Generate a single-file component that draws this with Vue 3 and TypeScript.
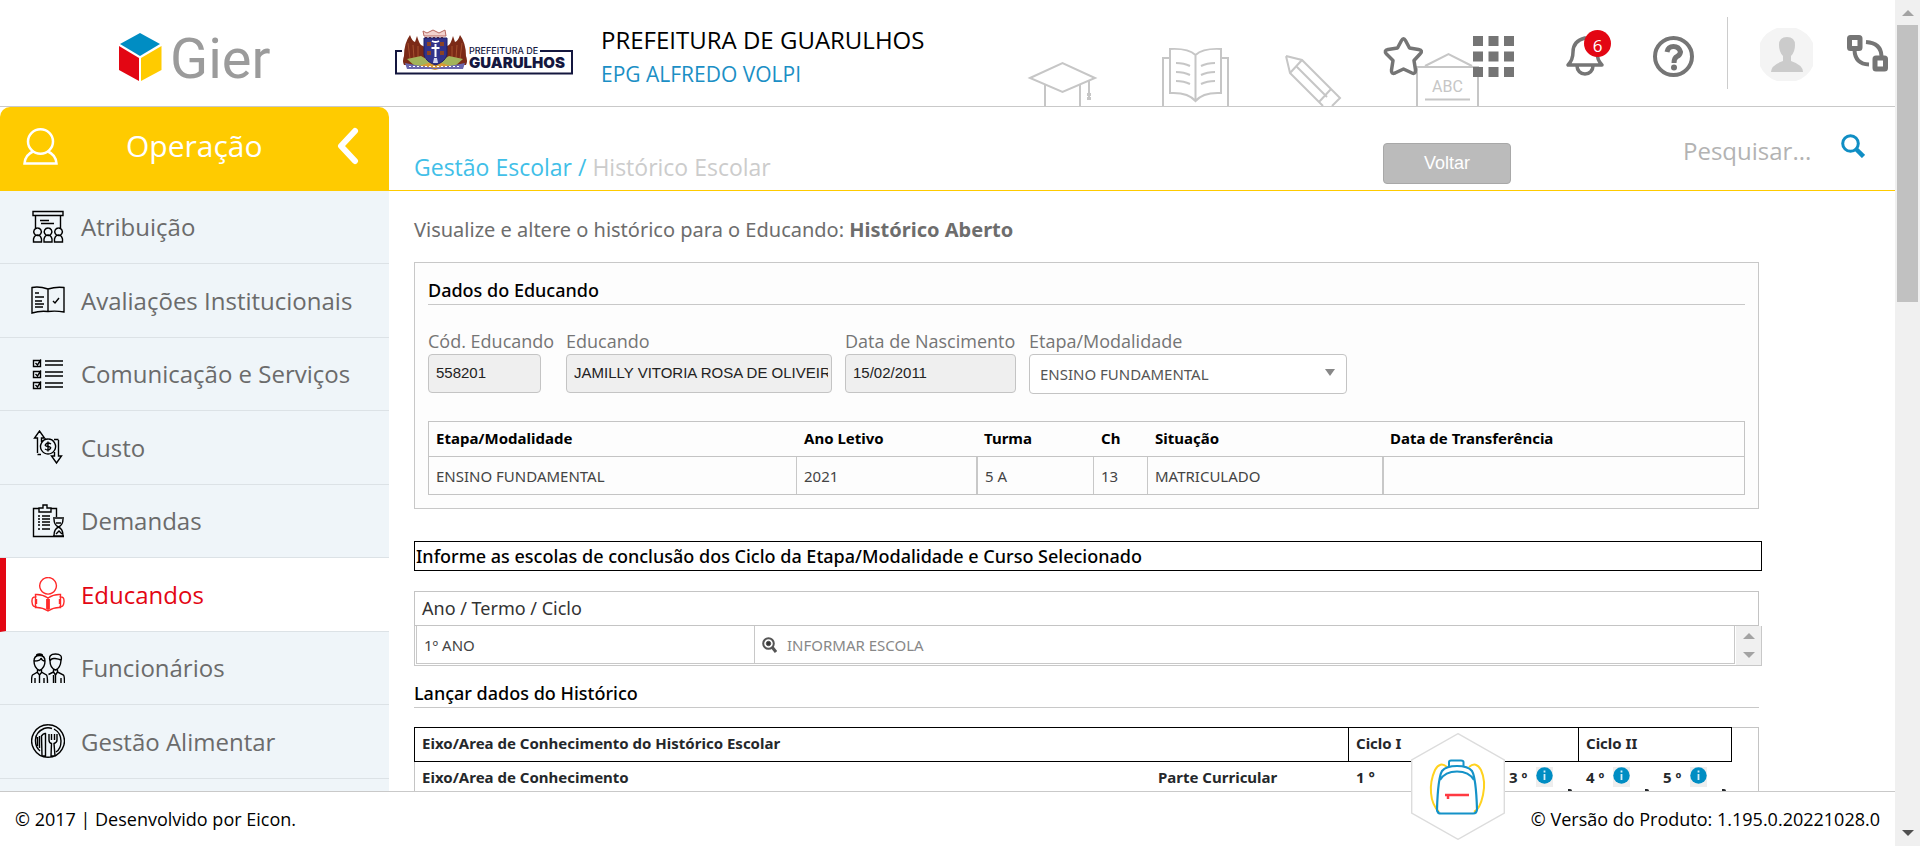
<script setup lang="ts">
import { ref } from 'vue'

interface MenuItem {
  label: string
  icon: string
  active?: boolean
}

const menu: MenuItem[] = [
  {
    label: 'Atribuição',
    icon: 'M2 1.5h30v4H2zM4.5 5.5V18M29.500 5.500V18M9 10.500h9M10 13.500h13M6.500 18a3.800 3.800 0 1 0 .1 0M17 18a3.800 3.800 0 1 0 .1 0M27.500 18a3.800 3.800 0 1 0 .1 0M2.500 32v-3q1-4 4-4t4 4v3zM13 32v-3q1-4 4-4t4 4v3zM23.500 32v-3q1-4 4-4t4 4v3z',
  },
  {
    label: 'Avaliações Institucionais',
    icon: 'M17 6Q8 3 1 4.500V30Q9 27.500 17 28.500Q25 27.500 33 29V4.500Q25 3.500 17 6V28.500M4 10h4M4 14h9M4 18h7M4 21h9M4 24h8M22 18l2 2 4-5',
  },
  {
    label: 'Comunicação e Serviços',
    icon: 'M2.500 3.500h7v6h-7zM4.500 6l2 2L10 2.500M2.500 14.500h7v6h-7zM4.500 17l2 2 3.500-5.500M2.500 25.500h7v6h-7zM4.500 28l2 2 3.500-5.500M14 4h18M14 8h18M14 15h18M14 19h18M14 26h18M14 30h18',
  },
  {
    label: 'Custo',
    icon: 'M6.500 23V8H3.500L8.500 1l5 7H10.500V12M6.500 24.500H10M27.500 10V26h3l-5 7-5-7h3V22M23 9.500h4.500M17 9a7.500 7.500 0 1 0 .1 0M20 14q-3-2-5 0t2 2.500 2 2.500-5 0M17 11.500v10',
  },
  {
    label: 'Demandas',
    icon: 'M8 4.500H2.500v28H33M8 8V4h4V1h4v3h4v4zM20 4.500h5.500V13M7 12h2M7 15h2M7 18h2M7 21h2M7 25h2M11 12h8M11 15h8M11 18h8M11 21h8M11 25h8M22 14h11M22 32h11M23 15q0 6 4.500 8-4.500 2-4.500 8.500M32 15q0 6-4.500 8 4.500 2 4.500 8.500M25 19h5M25 30l3-3 3 3',
  },
  {
    label: 'Educandos',
    icon: 'M17 .5a8.300 8.300 0 1 0 .1 0M17 21Q11 17 4.500 17.500V30.500Q11 30 17 34Q23 30 29.500 30.500V17.500Q23 17 17 21V34M15.800 22v10M18.200 22v10M5.500 20Q.5 19 1 25t4.500 4M5.500 22v5M28.500 20Q33.500 19 33 25t-4.500 4M28.500 22v5',
    active: true,
  },
  {
    label: 'Funcionários',
    icon: 'M5.500 5.500Q5 3 8.500 3t3 2.500M3 10q0-5.500 5.500-5.500T14 10q0 7-5.500 9.500Q3 17 3 10q7 0 7-3 1 3 4 3M6.500 18.500v2.500l-5 3Q.5 25 .5 32M10.500 18.500v2.500l5 3q1 1 1 8M6 21l2.500 3 2.500-3M8.500 24v8M4 27v5M13 27v5M19 10q-2-7 5.500-7T30 9.500Q29.500 17 24.500 19 19 17 19 10q1-3 5-2.500t6 1.500M22.500 18.500V21l-5 2.500M26.500 18.500V21l6 3q1 1 1 8M22.500 21l2 3 2-3M24.500 24v8M22.500 24v8M30 27v5',
  },
  {
    label: 'Gestão Alimentar',
    icon: 'M17 .7a16.300 16.300 0 1 0 .1 0M9 27Q4 23 4.500 15.500T13 4.500Q17 3 21 4.500M23 5q7 4 7 12t-5 11M10.500 12q2-3 4-2.500V32H11zM8.500 12v12M6.500 13v9M18 10v6q0 3 2.500 3.500L20 32h4l-1-12.500Q26 18.500 26 16v-6M20.500 10v6M23.500 10v6',
  },
]

const educandoColumns = ['Etapa/Modalidade', 'Ano Letivo', 'Turma', 'Ch', 'Situação', 'Data de Transferência']
const educandoRow = ['ENSINO FUNDAMENTAL', '2021', '5 A', '13', 'MATRICULADO', '']

const codigo = ref('558201')
const nome = ref('JAMILLY VITORIA ROSA DE OLIVEIRA')
const nascimento = ref('15/02/2011')
const etapa = ref('ENSINO FUNDAMENTAL')
const busca = ref('')
</script>

<template>
  <div class="window">
    <div class="page">
      <header class="top">
        <svg class="gier" width="164" height="76" viewBox="0 -12 164 76" role="img" aria-label="Gier">
          <path d="M21 1 41 12 21 24 1 12Z" fill="#008dc3" />
          <path d="M0 14 20 26V49L0 38Z" fill="#e30613" />
          <path d="M42.500 14 22 26V49L42.500 38Z" fill="#ffcb00" />
          <text x="51" y="46" class="gier-text">Gier</text>
        </svg>

        <svg class="brand" width="180" height="48" viewBox="0 0 180 48" role="img" aria-label="Prefeitura de Guarulhos">
          <path d="M8 22H2V44.500H178V22H146" fill="none" stroke="#14173f" stroke-width="2" />
          <path d="M29 2l4 2 6-3 6 3 6-3 1 6H30z" fill="#f1d3cf" stroke="#b86a62" />
          <path d="M31 9h20" stroke="#8d2a22" stroke-width="2" stroke-dasharray="2 2" />
          <path d="M16 6q2 6 5 7l2-6q2 7 4 9l4 2v18H10q-2-4 0-9 0-13 6-21z" fill="#7b2a17" />
          <path d="M66 6q-2 6-5 7l-2-6q-2 7-4 9l-4 2v18H72q2-4 0-9 0-13-6-21z" fill="#7b2a17" />
          <path d="M14 14l2 16M19 16l1 13M24 17v12M68 14l-2 16M63 16l-1 13M58 17v12" stroke="#a5502f" />
          <path d="M13 30l14-3 14 8 14-8 14 3-9 8H22z" fill="#a3b35a" />
          <path d="M25 37l16-5 16 5-16 4z" fill="#d99b35" />
          <path d="M11 34l10 2 20 3 20-3 10-2-2 6H13z" fill="#6b66ad" />
          <path d="M15 37.500h52" stroke="#fff" stroke-dasharray="2 2" />
          <path d="M30 9h23v17q-2 7-11.500 10Q32 33 30 26z" fill="#31338b" stroke="#1d2065" />
          <path d="M33 13h4v4h-4zM46 13h4v4h-4zM33 22h4v4h-4zM46 22h4v4h-4z" fill="#8b4325" />
          <path d="M41.500 15v13M37.500 19h8M38 12q3.500 2 7 0" fill="none" stroke="#fff" stroke-width="2" />
          <path d="M40 29h3l1 5h-5z" fill="#cfd3ef" />
          <text x="75" y="25" class="brand-small">PREFEITURA DE</text>
          <text x="75" y="39" class="brand-big">GUARULHOS</text>
        </svg>

        <div class="org">
          <span class="org-name">PREFEITURA DE GUARULHOS</span>
          <a class="org-unit" href="#">EPG ALFREDO VOLPI</a>
        </div>

        <svg class="scenery" width="460" height="60" viewBox="0 0 460 60" fill="none" stroke="#c6c6c6" stroke-width="2" aria-hidden="true">
          <path d="M5 32 37.500 17 70 32 37.500 46ZM20 39V60M55 39V60M64 35v17" />
          <path d="M64 47v7" stroke-width="4" stroke-dasharray="3 1" />
          <path d="M145 12H138V60M196 12H203V60M170.500 9Q163 2 145 3V47Q163 46 170.500 55Q178 46 196 47V3Q178 2 170.500 9V55" />
          <path d="M151 17q8 0 14 3M151 26q8 0 14 3M151 35q8 0 14 3M190 17q-8 0-14 3M190 26q-8 0-14 3M190 35q-8 0-14 3" />
          <path d="M261 10 265 27 298 60M261 10 277 14 315 52 307 60M265 27 277 14M272 21 302 51M306 43 294 56" />
          <path d="M392 60V21H453V60M400 20 423.500 8 447 20M400 53.500H445" />
          <text x="407" y="46" class="abc">ABC</text>
        </svg>

        <nav class="actions" aria-label="Atalhos">
          <button type="button" class="icon-button" aria-label="Favoritos">
            <svg width="41" height="41" viewBox="0 0 41 41" fill="none" stroke="#757575" stroke-width="3.500" stroke-linejoin="round">
              <path d="M18.500 4.500Q20.500 1 22.500 4.500L26.500 12 35.500 13.500Q40.500 14.500 37 18L31 24.500 32.500 34Q32.500 38.500 29 37L20.500 33 12 37Q8 38.500 8.500 34L10 24.500 3.500 18Q.5 14.500 5 13.500L14.500 12Z" />
            </svg>
          </button>
          <button type="button" class="icon-button" aria-label="Aplicativos">
            <svg width="41" height="41" viewBox="0 0 41 41" fill="#757575">
              <path d="M0 0h10v10H0zM15.500 0h10v10h-10zM31 0h10v10H31zM0 15.500h10v10H0zM15.500 15.500h10v10h-10zM31 15.500h10v10H31zM0 31h10v10H0zM15.500 31h10v10h-10zM31 31h10v10H31z" />
            </svg>
          </button>
          <button type="button" class="icon-button" aria-label="Notificações">
            <svg width="41" height="41" viewBox="0 0 41 41" fill="none" stroke="#757575" stroke-width="3.500" stroke-linejoin="round">
              <path d="M22 2Q10 5 10 16Q10 24 5 29H39Q34 24 34 16Q34 5 22 2ZM14 30a8 8 0 0 0 16 0" />
            </svg>
            <span class="badge">6</span>
          </button>
          <button type="button" class="icon-button" aria-label="Ajuda">
            <svg width="41" height="41" viewBox="0 0 41 41" fill="none" stroke="#757575">
              <circle cx="20.500" cy="20.500" r="18.500" stroke-width="4" />
              <path d="M14 16Q15 10.500 20.500 10.500T27.500 16Q27 19 24 20.500T21 27" stroke-width="5" />
              <circle cx="21" cy="31.500" r="3" fill="#757575" stroke="none" />
            </svg>
          </button>
        </nav>
        <span class="divider"></span>
        <button type="button" class="icon-button avatar" aria-label="Perfil">
          <svg width="53" height="53" viewBox="0 0 53 53">
            <path d="M17 0H36Q48 4 53 15V38Q48 49 36 53H17Q5 49 0 38V15Q5 4 17 0Z" fill="#f4f4f4" />
            <path d="M19 17Q19 9 27 9T35 17Q35 24 31 28V33Q43 37 43 44H11Q11 37 23 33V28Q19 24 19 17Z" fill="#cbcbcb" />
          </svg>
        </button>
        <button type="button" class="icon-button" aria-label="Trocar perfil">
          <svg width="41" height="37" viewBox="0 0 41 37" fill="none" stroke="#757575">
            <rect x="2.500" y="2.500" width="10.500" height="11" rx="1" stroke-width="5" />
            <rect x="28" y="23" width="10.500" height="11" rx="1" stroke-width="5" />
            <path d="M19 7Q34 8 34.500 21M7.500 15Q8 29 22 29.500" stroke-width="4" />
          </svg>
        </button>
      </header>

      <div class="body">
        <aside class="sidebar">
          <div class="sidebar-head">
            <svg width="35" height="37" viewBox="0 0 35 37" fill="none" stroke="#fff" stroke-width="2.500" aria-hidden="true">
              <ellipse cx="17.500" cy="13.500" rx="12.500" ry="12.200" />
              <path d="M10 23.500Q2 27 1.500 35.500H33.500Q33 27 25 23.500" />
            </svg>
            <span class="sidebar-title">Operação</span>
            <button type="button" class="icon-button" aria-label="Recolher menu">
              <svg width="24" height="38" viewBox="0 0 24 38" fill="none" stroke="#fff" stroke-width="6" stroke-linecap="round" stroke-linejoin="round">
                <path d="M19 4 5 19 19 34" />
              </svg>
            </button>
          </div>
          <nav class="menu" aria-label="Menu">
            <a v-for="item in menu" :key="item.label" href="#" class="menu-item" :class="{ active: item.active }">
              <svg width="34" height="35" viewBox="0 0 34 35" fill="none" stroke="currentColor" stroke-width="1.400" aria-hidden="true">
                <path :d="item.icon" />
              </svg>
              <span>{{ item.label }}</span>
            </a>
          </nav>
        </aside>

        <main class="main">
          <div class="toolbar">
            <div class="crumbs"><a href="#">Gestão Escolar /</a> <span>Histórico Escolar</span></div>
            <button type="button" class="back">Voltar</button>
            <form class="search" @submit.prevent>
              <input v-model="busca" type="text" placeholder="Pesquisar..." aria-label="Pesquisar" />
              <button type="submit" class="icon-button" aria-label="Buscar">
                <svg width="24" height="24" viewBox="0 0 24 24" fill="none" stroke="#108ec4">
                  <circle cx="9.500" cy="9.500" r="7.800" stroke-width="3" />
                  <path d="M15 15 22.500 22.500" stroke-width="4.500" />
                </svg>
              </button>
            </form>
          </div>

          <div class="content">
            <p class="intro">Visualize e altere o histórico para o Educando: <strong>Histórico Aberto</strong></p>

            <section class="panel">
              <h2 class="heading">Dados do Educando</h2>
              <div class="fields">
                <div class="field codigo-field">
                  <label for="codigo">Cód. Educando</label>
                  <input id="codigo" v-model="codigo" class="codigo" type="text" readonly />
                </div>
                <div class="field">
                  <label for="nome">Educando</label>
                  <input id="nome" v-model="nome" class="nome" type="text" readonly />
                </div>
                <div class="field">
                  <label for="nascimento">Data de Nascimento</label>
                  <input id="nascimento" v-model="nascimento" class="nascimento" type="text" readonly />
                </div>
                <div class="field select-field">
                  <label for="etapa">Etapa/Modalidade</label>
                  <select id="etapa" v-model="etapa">
                    <option>ENSINO FUNDAMENTAL</option>
                  </select>
                </div>
              </div>
              <table class="educando">
                <colgroup>
                  <col class="c-etapa" /><col class="c-ano" /><col class="c-turma" /><col class="c-ch" /><col class="c-situacao" /><col />
                </colgroup>
                <thead>
                  <tr><th v-for="c in educandoColumns" :key="c" scope="col">{{ c }}</th></tr>
                </thead>
                <tbody>
                  <tr><td v-for="(v, i) in educandoRow" :key="i">{{ v }}</td></tr>
                </tbody>
              </table>
            </section>

            <h2 class="notice">Informe as escolas de conclusão dos Ciclo da Etapa/Modalidade e Curso Selecionado</h2>

            <section class="schools">
              <h3 class="schools-head">Ano / Termo / Ciclo</h3>
              <div class="schools-scroll">
                <table>
                  <tbody>
                    <tr>
                      <td class="year">1º ANO</td>
                      <td>
                        <button type="button" class="inform">
                          <svg width="15" height="16" viewBox="0 0 15 16" fill="none" stroke="#555" aria-hidden="true">
                            <circle cx="6.500" cy="6.500" r="5.300" stroke-width="2" />
                            <circle cx="6.500" cy="6.500" r="2.200" fill="#333" />
                            <path d="M10 10 14 15" stroke-width="3" />
                          </svg>
                          <span>INFORMAR ESCOLA</span>
                        </button>
                      </td>
                    </tr>
                  </tbody>
                </table>
                <div class="mini-bar" aria-hidden="true"><i class="up"></i><i class="down"></i></div>
              </div>
            </section>

            <h2 class="heading launch">Lançar dados do Histórico</h2>

            <div class="grades">
              <table>
                <colgroup>
                  <col /><col class="c-part" /><col class="c-y1" /><col class="c-y" /><col class="c-y" /><col class="c-y" /><col class="c-y" />
                </colgroup>
                <thead>
                  <tr class="boxed">
                    <th colspan="2" scope="colgroup">Eixo/Area de Conhecimento do Histórico Escolar</th>
                    <th colspan="3" scope="colgroup">Ciclo I</th>
                    <th colspan="2" scope="colgroup">Ciclo II</th>
                  </tr>
                  <tr class="years">
                    <th scope="col">Eixo/Area de Conhecimento</th>
                    <th scope="col">Parte Curricular</th>
                    <th scope="col">1 °</th>
                    <th v-for="n in [2, 3, 4, 5]" :key="n" scope="col">
                      <span class="year-cell">
                        {{ n }} º
                        <button type="button" class="info" :aria-label="`Informações do ${n}º ano`">
                          <svg width="17" height="17" viewBox="0 0 17 17" aria-hidden="true">
                            <circle cx="8.500" cy="8.500" r="8.200" fill="#008dc3" />
                            <path d="M8.500 3.500v2M8.500 7v6" stroke="#d8eef7" stroke-width="1.800" />
                          </svg>
                        </button>
                        <i class="mark"></i>
                      </span>
                    </th>
                  </tr>
                </thead>
              </table>
            </div>
          </div>
        </main>
      </div>

      <footer class="footer">
        <span>© 2017 | Desenvolvido por Eicon.</span>
        <span>© Versão do Produto: 1.195.0.20221028.0</span>
      </footer>

      <button type="button" class="backpack" aria-label="Mochila">
        <svg width="94" height="107" viewBox="0 0 94 107" fill="none">
          <path d="M47 .7 93.300 27V80L47 106.300 .7 80V27Z" fill="#fff" stroke="#dcdcdc" stroke-width="1.400" />
          <path d="M36 34Q29 28 24 37Q19 48 20 60T28 79M58 34Q65 28 70 37Q75 48 72 62T63 79" stroke="#ffd21f" stroke-width="2" />
          <path d="M27 79Q26 79 26 76Q27 45 31 38Q35 33 46 33T61 38Q65 45 66 76Q66 80.500 62 80.500H30Q27 80.500 27 79Z" stroke="#1492c8" stroke-width="2.200" />
          <path d="M29 47Q34 38.500 46 38.500T63 47M38 33V29Q38 27.500 40 27.500H50Q52.500 27.500 52.500 29V33" stroke="#1492c8" stroke-width="2" />
          <path d="M34 62H58M37 62v4" stroke="#ff3a42" stroke-width="2.500" />
        </svg>
      </button>
    </div>

    <div class="scrollbar" aria-hidden="true">
      <i class="up"></i>
      <div class="thumb"></div>
      <i class="down"></i>
    </div>
  </div>
</template>

<style>
body {
  margin: 0;
}
</style>

<style scoped>
* {
  box-sizing: border-box;
}

.window {
  display: flex;
  height: 100vh;
  overflow: hidden;
  background: #fff;
  color: #000;
  font-family: 'Open Sans', 'Noto Sans', sans-serif;
  font-size: 15px;
}

a {
  color: inherit;
  text-decoration: none;
}

h2,
h3,
p {
  margin: 0;
}

table {
  width: 100%;
  border-spacing: 0;
  table-layout: fixed;
}

th,
td {
  text-align: left;
}

.icon-button {
  position: relative;
  display: flex;
  padding: 0;
  border: 0;
  background: none;
}

.page {
  position: relative;
  display: flex;
  flex: 1;
  flex-direction: column;
  min-width: 0;
}

/* header */
.top {
  position: relative;
  display: flex;
  flex: none;
  align-items: center;
  height: 107px;
  padding: 0 7px 0 119px;
  border-bottom: 1px solid #c9c9c9;
}

.gier {
  margin-top: 10px;
}

.gier-text {
  fill: #9b9b9b;
  font-family: Roboto, sans-serif;
  font-size: 56px;
  font-weight: 400;
}

.brand {
  margin-left: 111px;
}

.brand-small {
  fill: #14173f;
  font-family: Inter, sans-serif;
  font-size: 9px;
  font-weight: 500;
}

.brand-big {
  fill: #14173f;
  font-family: Inter, sans-serif;
  font-size: 15px;
  font-weight: 900;
}

.org {
  display: flex;
  flex: 1;
  flex-direction: column;
  margin-left: 27px;
  padding-top: 8px;
  white-space: nowrap;
}

.org-name {
  font-size: 24px;
  line-height: 34px;
}

.org-unit {
  color: #1b8fc5;
  font-size: 21px;
  line-height: 34px;
}

.scenery {
  position: absolute;
  right: 410px;
  bottom: 0;
}

.abc {
  fill: #c6c6c6;
  stroke: none;
  font-family: Roboto, sans-serif;
  font-size: 16px;
}

.actions {
  display: flex;
  gap: 49px;
  padding-top: 7px;
}

.badge {
  position: absolute;
  top: -6px;
  right: -7px;
  width: 27px;
  height: 27px;
  border-radius: 50%;
  background: #e30613;
  color: #fff;
  font-family: 'Open Sans', sans-serif;
  font-size: 17px;
  line-height: 32px;
  text-align: center;
}

.divider {
  align-self: center;
  width: 1px;
  height: 72px;
  margin: 0 32px 0 33px;
  background: #ccc;
}

.avatar {
  margin-top: 2px;
  margin-right: 34px;
}

/* body */
.body {
  display: flex;
  flex: 1;
  min-height: 0;
}

.sidebar {
  flex: none;
  width: 389px;
  overflow: hidden;
  background: linear-gradient(#fff 84px, #eff5f9 84px);
}

.sidebar-head {
  display: flex;
  align-items: center;
  height: 84px;
  padding: 0 29px 6px 23px;
  border-radius: 10px 10px 0 0;
  background: #ffcb00;
  color: #fff;
}

.sidebar-title {
  flex: 1;
  padding-left: 68px;
  font-size: 30px;
  line-height: 40px;
}

.menu {
  display: flex;
  flex-direction: column;
}

.menu-item {
  display: flex;
  align-items: center;
  gap: 16px;
  height: 73px;
  padding-left: 31px;
  border-bottom: 1px solid #dce2e6;
  color: #000;
  font-size: 24px;
}

.menu-item:nth-child(even) {
  height: 74px;
}

.menu-item span {
  padding-bottom: 1px;
  color: #6b6b6b;
}

.menu-item.active {
  padding-left: 25px;
  border-left: 6px solid #e30613;
  background: #fff;
  color: #ff2a2a;
}

.menu-item.active span {
  color: #e30613;
}

.main {
  display: flex;
  flex: 1;
  flex-direction: column;
  min-width: 0;
}

.toolbar {
  display: flex;
  flex: none;
  height: 84px;
  padding: 0 30px 0 25px;
  border-bottom: 1px solid #ffcb00;
}

.crumbs {
  flex: 1;
  padding-top: 44px;
  color: #ccc;
  font-size: 23px;
  line-height: 32px;
}

.crumbs a {
  color: #41bfe8;
}

.back {
  width: 128px;
  height: 41px;
  margin-top: 36px;
  padding: 0;
  border: 1px solid #a8a8a8;
  border-radius: 4px;
  background: #bbb;
  color: #fff;
  font-family: 'Liberation Sans', sans-serif;
  font-size: 18px;
}

.search {
  display: flex;
  align-items: flex-start;
  gap: 8px;
  margin-left: 172px;
  padding-top: 27px;
}

.search input {
  width: 150px;
  height: 32px;
  padding: 0;
  border: 0;
  outline: 0;
  background: none;
  font-family: inherit;
  font-size: 24px;
}

.search input::placeholder {
  color: #b3b3b3;
}

.content {
  flex: 1;
  min-height: 0;
  padding: 23px 136px 0 25px;
  overflow: hidden;
  font-family: 'Noto Sans', 'Open Sans', sans-serif;
}

.intro {
  color: #6d6d6d;
  font-size: 20px;
  line-height: 32px;
}

.panel {
  margin-top: 16px;
  padding: 13px;
  border: 1px solid #c8c8c8;
  background: #fdfdfd;
}

.heading {
  border-bottom: 1px solid #c8c8c8;
  font-size: 18px;
  font-weight: 500;
  line-height: 28px;
}

.fields {
  display: flex;
  gap: 13px;
  margin-top: 24px;
}

.field {
  display: flex;
  flex-direction: column;
  color: #757575;
}

.codigo-field {
  width: 125px;
}

.field label {
  font-family: 'Open Sans', sans-serif;
  font-size: 18px;
  line-height: 25px;
  white-space: nowrap;
}

.field input {
  height: 39px;
  padding: 0 7px 2px;
  border: 1px solid #c4c4c4;
  border-radius: 4px;
  outline: 0;
  background: #efefef;
  color: #222;
  font-family: 'Liberation Sans', sans-serif;
  font-size: 15px;
}

.field .codigo {
  width: 113px;
}

.field .nome {
  width: 266px;
  padding-right: 3px;
}

.field .nascimento {
  width: 171px;
}

.select-field {
  position: relative;
}

.field select {
  width: 318px;
  height: 40px;
  padding: 0 10px;
  border: 1px solid #c4c4c4;
  border-radius: 4px;
  appearance: none;
  background: #fff;
  color: #555;
  font-family: inherit;
  font-size: 15px;
}

.select-field::after {
  position: absolute;
  right: 12px;
  bottom: 18px;
  border: 5px solid transparent;
  border-top: 7px solid #888;
  border-bottom: 0;
  content: '';
}

.educando {
  margin-top: 27px;
  border: 1px solid #c4c4c4;
}

.c-etapa {
  width: 367px;
}

.c-ano {
  width: 180px;
}

.c-turma {
  width: 117px;
}

.c-ch {
  width: 54px;
}

.c-situacao {
  width: 235px;
}

.educando th,
.educando td {
  height: 37px;
  padding: 0 7px;
}

.educando th {
  height: 35px;
  padding: 0 7px 3px 8px;
  border-bottom: 1px solid #c4c4c4;
  font-weight: 700;
}

.educando td {
  border-left: 1px solid #c8c8c8;
  color: #444;
}

.educando th:first-child,
.educando td:first-child {
  padding-left: 7px;
}

.educando td:first-child {
  border-left: 0;
}

.educando td:nth-child(3),
.educando td:nth-child(6) {
  border-left-width: 2px;
}

.notice {
  width: calc(100% + 3px);
  margin-top: 32px;
  padding-left: 1px;
  border: 1px solid #000;
  font-size: 18px;
  font-weight: 500;
  line-height: 28px;
}

.schools {
  margin-top: 20px;
}

.schools-head {
  padding-left: 7px;
  border: 1px solid #c4c4c4;
  color: #333;
  font-size: 18px;
  font-weight: 400;
  line-height: 33px;
}

.schools-scroll {
  display: flex;
  width: calc(100% + 3px);
  border: 1px solid #c8c8c8;
  border-top: 0;
}

.schools-scroll table {
  flex: 1;
  margin: 0 1px 1px;
  border: 1px solid #c8c8c8;
  border-top: 0;
}

.schools-scroll td {
  height: 37px;
  padding: 0 7px;
  color: #444;
}

.schools-scroll .year {
  width: 338px;
  border-right: 1px solid #c8c8c8;
}

.inform {
  display: flex;
  align-items: center;
  gap: 10px;
  padding: 0;
  border: 0;
  background: none;
  color: #888;
  font-family: inherit;
  font-size: 15px;
}

.mini-bar {
  display: flex;
  flex-direction: column;
  align-items: center;
  justify-content: space-between;
  width: 25px;
  padding: 7px 0;
  background: #f0f0f0;
}

.up,
.down {
  border: 6px solid transparent;
}

.up {
  border-top: 0;
  border-bottom-color: #a3a3a3;
}

.down {
  border-bottom: 0;
  border-top-color: #a3a3a3;
}

.launch {
  margin-top: 13px;
}

.grades {
  height: 200px;
  margin-top: 19px;
  padding-right: 26px;
  border: solid #c4c4c4;
  border-width: 1px 1px 0;
  color: #25282b;
}

.grades table {
  width: calc(100% + 1px);
  margin: -1px 0 0 -1px;
}

.grades .c-part {
  width: 198px;
}

.grades .c-y1 {
  width: 76px;
}

.grades .c-y {
  width: 77px;
}

.grades th {
  height: 35px;
  padding: 0 0 0 8px;
  font-weight: 700;
}

.grades .boxed th {
  padding: 0 0 3px 7px;
  border: solid #000;
  border-width: 1px 0 1px 1px;
}

.grades .boxed th:last-child {
  border-right-width: 1px;
}

.grades .years th {
  height: 29px;
}

.year-cell {
  position: relative;
  display: flex;
  align-items: center;
  gap: 9px;
}

.info {
  display: flex;
  width: 17px;
  height: 20px;
  padding: 0;
  border: 0;
  background: #eee;
}

.mark {
  position: absolute;
  right: 6px;
  bottom: -4px;
  width: 4px;
  height: 2px;
  border-radius: 0 2px 0 0;
  background: #25282b;
}

/* footer */
.footer {
  display: flex;
  flex: none;
  align-items: center;
  justify-content: space-between;
  height: 55px;
  padding: 0 15px;
  border-top: 1px solid #c9c9c9;
  background: #fff;
  font-size: 18px;
}

.backpack {
  position: absolute;
  right: 390px;
  bottom: 6px;
  display: flex;
  padding: 0;
  border: 0;
  background: none;
}

/* scroll track */
.scrollbar {
  display: flex;
  flex: none;
  flex-direction: column;
  align-items: center;
  width: 25px;
  padding: 10px 0;
  background: #f0f0f0;
}

.scrollbar .thumb {
  flex: 0 0 277px;
  width: 21px;
  margin-top: 9px;
  background: #c1c1c1;
}

.scrollbar .down {
  margin-top: auto;
  border-top-color: #505050;
}
</style>
